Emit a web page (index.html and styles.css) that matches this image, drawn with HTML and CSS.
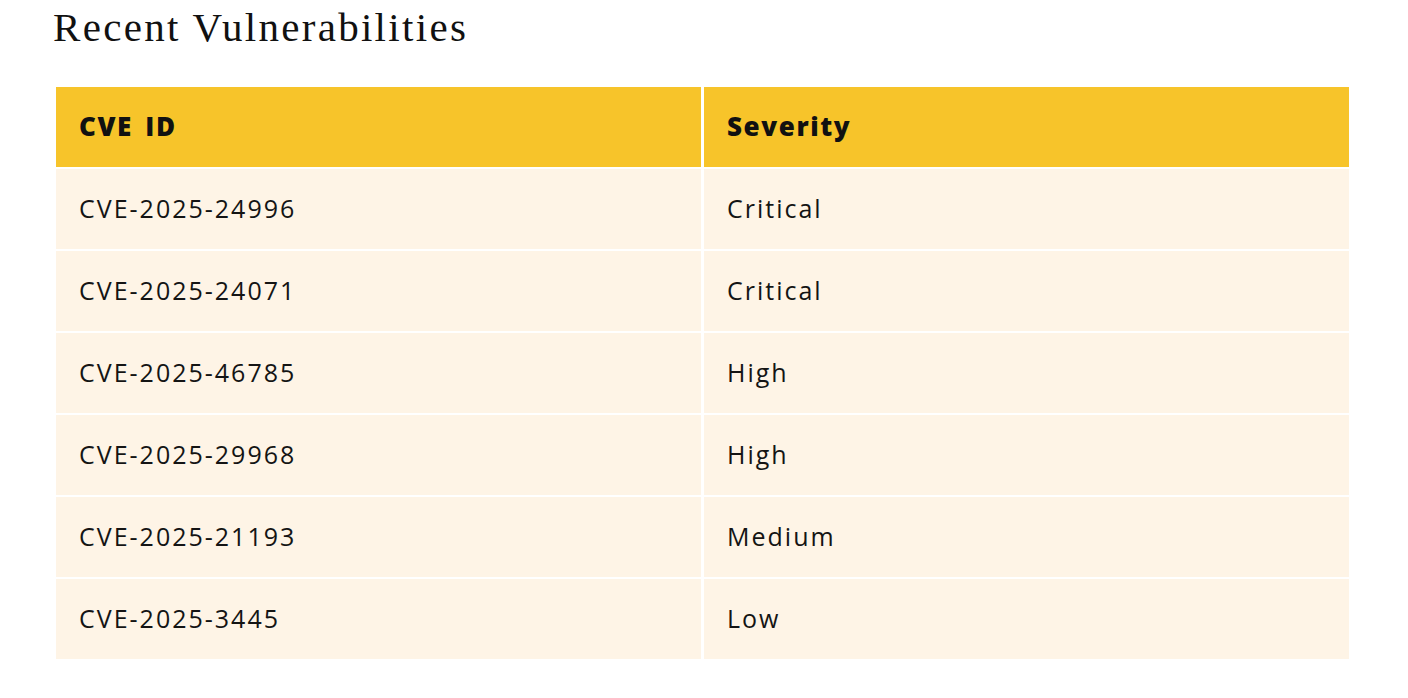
FILE: index.html
```html
<!DOCTYPE html>
<html lang="en">
<head>
<meta charset="utf-8">
<title>Recent Vulnerabilities</title>
<link rel="stylesheet" href="styles.css">
</head>
<body>
<main class="page">
  <h1 class="title">Recent Vulnerabilities</h1>
  <div class="vuln-table" role="table">
    <div class="cell head" role="columnheader">CVE ID</div>
    <div class="cell head" role="columnheader">Severity</div>
    <div class="cell" role="cell">CVE-2025-24996</div>
    <div class="cell" role="cell">Critical</div>
    <div class="cell" role="cell">CVE-2025-24071</div>
    <div class="cell" role="cell">Critical</div>
    <div class="cell" role="cell">CVE-2025-46785</div>
    <div class="cell" role="cell">High</div>
    <div class="cell" role="cell">CVE-2025-29968</div>
    <div class="cell" role="cell">High</div>
    <div class="cell" role="cell">CVE-2025-21193</div>
    <div class="cell" role="cell">Medium</div>
    <div class="cell" role="cell">CVE-2025-3445</div>
    <div class="cell" role="cell">Low</div>
  </div>
</main>
</body>
</html>
```
FILE: styles.css
```css
html, body {
  margin: 0;
  padding: 0;
  background: #ffffff;
}
.page {
  padding: 0 59px 0 53px;
  font-family: "Open Sans", "Noto Sans", "Liberation Sans", sans-serif;
  color: #161616;
}
.title {
  font-family: "Liberation Serif", serif;
  font-weight: 400;
  font-size: 41px;
  line-height: 46px;
  letter-spacing: 2.3px;
  margin: 4px 0 0 0;
  color: #111;
}
.vuln-table {
  margin: 37px 0 0 3px;
  display: grid;
  grid-template-columns: 1fr 1fr;
  grid-auto-rows: 80px;
  gap: 2px 3px;
}
.cell {
  display: flex;
  align-items: center;
  padding: 0 23px 3px;
  background: #fef4e6;
  font-size: 25px;
  font-weight: 500;
  letter-spacing: 2px;
  color: #141414;
}
.cell.head {
  background: #f7c42a;
  font-size: 26px;
  font-weight: 800;
  letter-spacing: 1.6px;
  word-spacing: 4px;
  color: #111;
}
```
